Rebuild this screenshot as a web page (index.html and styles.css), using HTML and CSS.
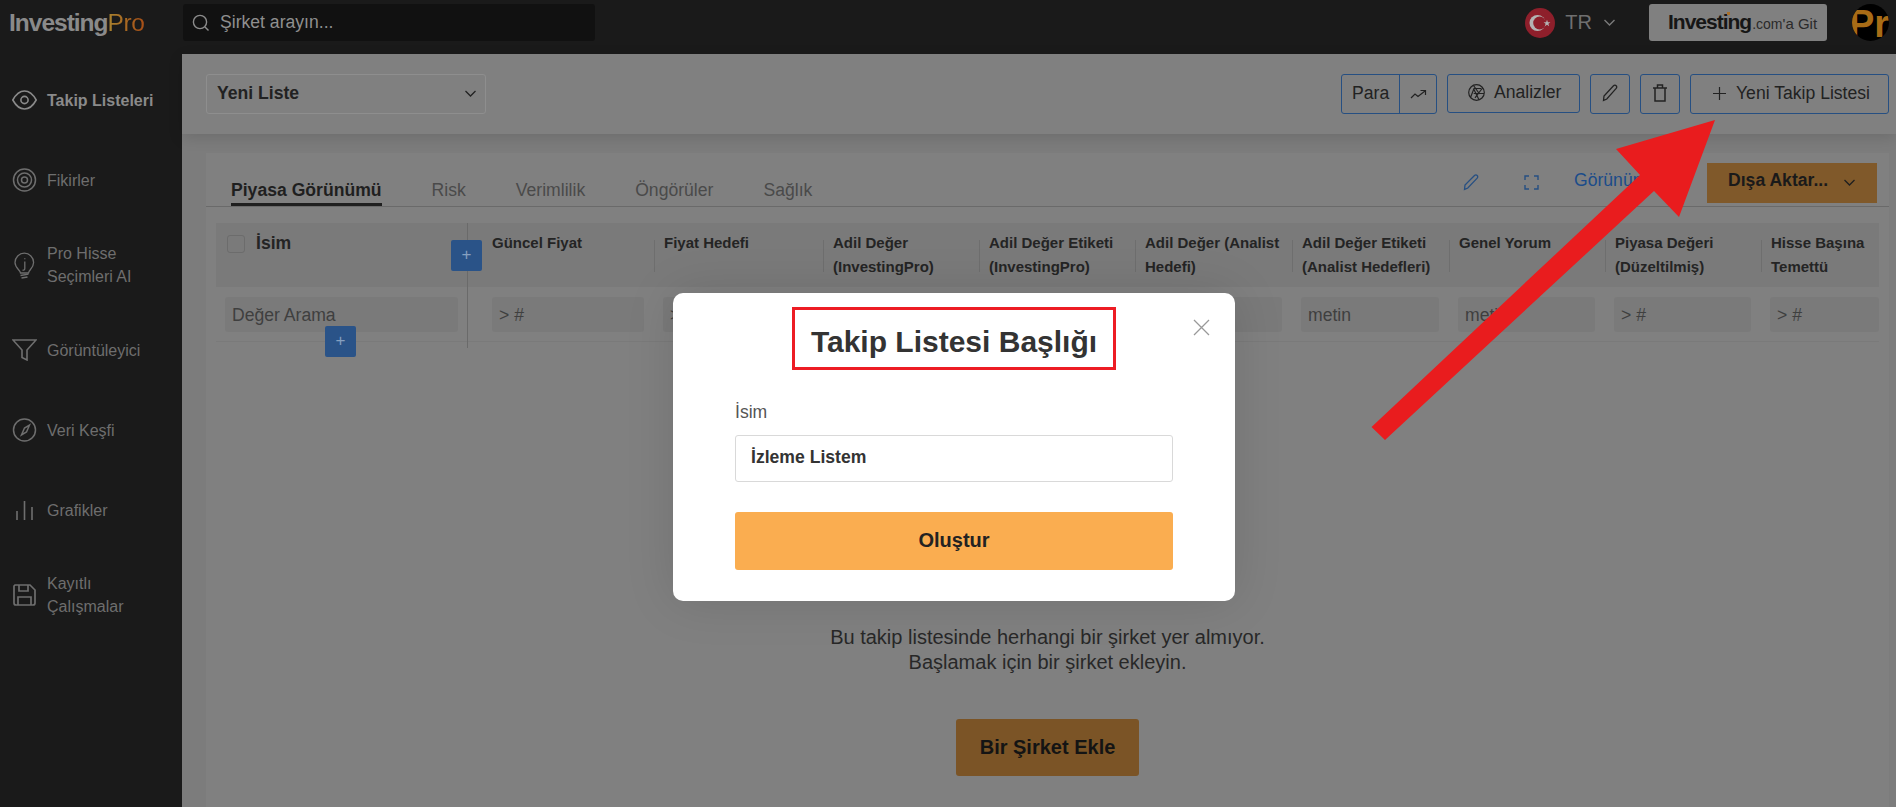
FILE: index.html
```html
<!DOCTYPE html>
<html lang="tr">
  <head>
    <title>Takip Listeleri • InvestingPro</title>
    <meta http-equiv="Content-Type" content="text/html;charset=UTF-8">
    <link rel="stylesheet" href="styles.css">
  </head>
  <body>
    <!-- Top bar -->
    <header class="topbar">
      <div class="logo">Investing<span class="logo-pro">Pro</span></div>
      <div class="search">
        <svg class="icon" width="18" height="18" viewBox="0 0 18 18" fill="none" stroke="#8c8c8c" stroke-width="1.4"><circle cx="8" cy="8" r="6.6"/><path d="M13 13l3.5 3.5"/></svg>
        <span>Şirket arayın...</span>
      </div>
      <div class="topbar-right">
        <svg class="flag" width="30" height="30" viewBox="0 0 30 30">
          <circle cx="15" cy="15" r="15" fill="#8e1f2b"/>
          <circle cx="12.5" cy="15" r="8" fill="#b3b3b3"/>
          <circle cx="14.6" cy="15" r="6.4" fill="#8e1f2b"/>
          <polygon points="22,11.8 22.9,14.2 25.4,14.2 23.4,15.8 24.1,18.2 22,16.8 19.9,18.2 20.6,15.8 18.6,14.2 21.1,14.2" fill="#b3b3b3"/>
        </svg>
        <span class="lang">TR</span>
        <svg class="lang-chevron" width="11" height="7" viewBox="0 0 11 7" fill="none" stroke="#7a7a7a" stroke-width="1.4"><path d="M.5 1l5 5 5-5"/></svg>
        <div class="git-btn"><span class="git-brand">Investing</span><span class="git-com">.com</span><span class="git-text">'a Git</span></div>
        <div class="avatar"><span>Pro</span></div>
      </div>
    </header>

    <div class="shell">
      <!-- Sidebar -->
      <nav class="sidebar">
        <a class="nav-item active">
          <svg width="25" height="20" viewBox="0 0 25 20" fill="none" stroke="#8a8a8a" stroke-width="1.6"><path d="M.8 10C4 4.2 8 1 12.5 1S21 4.2 24.2 10C21 15.8 17 19 12.5 19S4 15.8.8 10z"/><circle cx="12.5" cy="10" r="3.6"/></svg>
          <span>Takip Listeleri</span>
        </a>
        <a class="nav-item">
          <svg width="25" height="24" viewBox="0 0 25 24" fill="none" stroke="#6e6e6e" stroke-width="1.5"><circle cx="12.5" cy="12" r="11"/><circle cx="12.5" cy="12" r="7"/><circle cx="12.5" cy="12" r="3"/></svg>
          <span>Fikirler</span>
        </a>
        <a class="nav-item">
          <svg width="25" height="27" viewBox="0 0 25 27" fill="none" stroke="#6e6e6e" stroke-width="1.3"><path d="M8.5 21c-.3-3-5.5-5-5.5-10.5a9.300 9.300 0 0 1 18.600 0C21.600 16 16.800 18 16.500 21z"/><path d="M12.800 9.500v7c0 1.500-1 2-2.300 1.500M12.800 6.200v1M8.500 23.500l8-1.300M9.500 26l6-1"/></svg>
          <span>Pro Hisse<br>Seçimleri AI</span>
        </a>
        <a class="nav-item">
          <svg width="25" height="22" viewBox="0 0 25 22" fill="none" stroke="#6e6e6e" stroke-width="1.6"><path d="M1 1h23l-9 10v10l-5-2.500V11z"/></svg>
          <span>Görüntüleyici</span>
        </a>
        <a class="nav-item">
          <svg width="25" height="24" viewBox="0 0 25 24" fill="none" stroke="#6e6e6e" stroke-width="1.5"><circle cx="12.5" cy="12" r="11"/><path d="M17.500 7l-3 7-5 3 3-7z"/></svg>
          <span>Veri Keşfi</span>
        </a>
        <a class="nav-item">
          <svg width="25" height="20" viewBox="0 0 25 20" fill="none" stroke="#6e6e6e" stroke-width="1.6"><path d="M5 20v-9M12.500 20V1M20 20V7"/></svg>
          <span>Grafikler</span>
        </a>
        <a class="nav-item">
          <svg width="25" height="22" viewBox="0 0 25 22" fill="none" stroke="#6e6e6e" stroke-width="1.7"><path d="M3 1h15l5 5v13a2 2 0 0 1-2 2H4a2 2 0 0 1-2-2V2z"/><path d="M7 1v6h9V1M6 21v-8h13v8"/></svg>
          <span>Kayıtlı<br>Çalışmalar</span>
        </a>
      </nav>

      <main class="content">
        <!-- Toolbar -->
        <div class="toolbar">
          <div class="list-select">
            <span>Yeni Liste</span>
            <svg width="11" height="7" viewBox="0 0 11 7" fill="none" stroke="#222" stroke-width="1.3"><path d="M.5 1l5 5 5-5"/></svg>
          </div>
          <div class="actions">
            <div class="btn btn-split">
              <span class="split-label">Para</span>
              <span class="split-icon"><svg width="17" height="11" viewBox="0 0 17 11" fill="none" stroke="#222" stroke-width="1.2"><path d="M1 9l4-4 3 2.500L15 2M10.500 1.500H15.500V6"/></svg></span>
            </div>
            <div class="btn btn-analiz">
              <svg width="17" height="17" viewBox="0 0 17 17" fill="none" stroke="#222" stroke-width="1.2"><circle cx="8.500" cy="8.500" r="7.800"/><path d="M5.500 1.500l6 8.500M14.500 4l-7.500 9.800M16 9.500H5.700M11 15.800L5.700 5M2.500 13.500L6 4.500h7"/></svg>
              <span>Analizler</span>
            </div>
            <div class="btn btn-square">
              <svg width="16" height="18" viewBox="0 0 16 18" fill="none" stroke="#222" stroke-width="1.3"><path d="M1.500 16.500l.5-4.500L11.500 1.800c.8-.8 2-.8 2.700 0 .7.700.7 1.900 0 2.600L4.800 15z"/></svg>
            </div>
            <div class="btn btn-square">
              <svg width="14" height="18" viewBox="0 0 14 18" fill="none" stroke="#222" stroke-width="1.5"><path d="M0 4h14M4.500 4V1h5v3M2 4v13h10V4"/></svg>
            </div>
            <div class="btn btn-new">
              <svg width="13" height="13" viewBox="0 0 13 13" fill="none" stroke="#222" stroke-width="1.2"><path d="M6.500 0v13M0 6.500h13"/></svg>
              <span>Yeni Takip Listesi</span>
            </div>
          </div>
        </div>

        <!-- Watchlist card -->
        <section class="card">
          <div class="tabs-row">
            <div class="tabs">
              <span class="tab active">Piyasa Görünümü</span>
              <span class="tab">Risk</span>
              <span class="tab">Verimlilik</span>
              <span class="tab">Öngörüler</span>
              <span class="tab">Sağlık</span>
            </div>
            <div class="tab-tools">
              <svg class="tool-pencil" width="16" height="17" viewBox="0 0 16 17" fill="none" stroke="#264f82" stroke-width="1.3"><path d="M1.500 15.500l.5-4.500L11.500 1.500c.8-.8 2-.8 2.700 0 .7.700.7 1.900 0 2.600L4.800 14z"/></svg>
              <svg class="tool-expand" width="15" height="15" viewBox="0 0 15 15" fill="none" stroke="#264f82" stroke-width="1.4"><path d="M1 5V1h4M10 1h4v4M14 10v4h-4M5 14H1v-4"/></svg>
              <span class="tool-link">Görünüm</span>
              <div class="export-btn">
                <span>Dışa Aktar...</span>
                <svg width="11" height="7" viewBox="0 0 11 7" fill="none" stroke="#1f1f1f" stroke-width="1.3"><path d="M.5 1l5 5 5-5"/></svg>
              </div>
            </div>
          </div>

          <div class="table">
            <div class="cols table-head">
              <div class="name-head"><span class="check"></span><span>İsim</span></div>
              <div class="hcell first">Güncel Fiyat</div>
              <div class="hcell">Fiyat Hedefi</div>
              <div class="hcell">Adil Değer (InvestingPro)</div>
              <div class="hcell">Adil Değer Etiketi (InvestingPro)</div>
              <div class="hcell">Adil Değer (Analist Hedefi)</div>
              <div class="hcell">Adil Değer Etiketi (Analist Hedefleri)</div>
              <div class="hcell">Genel Yorum</div>
              <div class="hcell">Piyasa Değeri (Düzeltilmiş)</div>
              <div class="hcell">Hisse Başına Temettü</div>
            </div>
            <div class="cols table-filter">
              <div class="fcell name"><span class="finput">Değer Arama</span></div>
              <div class="fcell first"><span class="finput">&gt; #</span></div>
              <div class="fcell"><span class="finput">&gt; #</span></div>
              <div class="fcell"><span class="finput">&gt; #</span></div>
              <div class="fcell"><span class="finput">metin</span></div>
              <div class="fcell"><span class="finput">&gt; #</span></div>
              <div class="fcell"><span class="finput">metin</span></div>
              <div class="fcell"><span class="finput">metin</span></div>
              <div class="fcell"><span class="finput">&gt; #</span></div>
              <div class="fcell last"><span class="finput">&gt; #</span></div>
            </div>
            <span class="freeze-line"></span>
            <span class="add-btn add-col">+</span>
            <span class="add-btn add-row">+</span>
          </div>

          <div class="empty">
            <p>Bu takip listesinde herhangi bir şirket yer almıyor.<br>Başlamak için bir şirket ekleyin.</p>
            <div class="add-company">Bir Şirket Ekle</div>
          </div>
        </section>
      </main>
    </div>

    <!-- Dialog -->
    <div class="modal">
      <svg class="modal-close" width="17" height="17" viewBox="0 0 17 17" fill="none" stroke="#999" stroke-width="1.3"><path d="M1 1l15 15M16 1L1 16"/></svg>
      <h2 class="modal-title">Takip Listesi Başlığı</h2>
      <label class="modal-label">İsim</label>
      <div class="modal-input">İzleme Listem</div>
      <div class="modal-submit">Oluştur</div>
    </div>

    <!-- Red annotation arrow -->
    <svg class="annotation" width="1896" height="807" viewBox="0 0 1896 807">
      <polygon points="1715,120 1679,217 1654,191 1385,440 1371.5,427 1640,175 1616,149" fill="#e91c1e"/>
    </svg>
  </body>
</html>
```

FILE: styles.css
```css
* {
  box-sizing: border-box;
}
html, body {
  margin: 0;
  height: 100%;
}
body {
  overflow: hidden;
  background-color: #7c7c7c;
  color: #222;
  font-family: "Liberation Sans", Arial, sans-serif;
  font-size: 17.6px;
}

/* Top bar */
.topbar {
  display: flex;
  align-items: flex-start;
  height: 54px;
  padding: 4px 7px 0 0;
  background-color: #1a1a1a;
}
.logo {
  width: 183px;
  height: 37px;
  padding-left: 9px;
  line-height: 37px;
  font-size: 24.5px;
  font-weight: bold;
  letter-spacing: -1px;
  color: #8a8a8a;
}
.logo-pro {
  font-weight: normal;
  letter-spacing: -.4px;
  background: linear-gradient(90deg, #a8822f, #a84f16);
  -webkit-background-clip: text;
  background-clip: text;
  color: transparent;
}
.search {
  display: flex;
  align-items: center;
  gap: 10px;
  width: 412px;
  height: 37px;
  padding-left: 9px;
  border-radius: 3px;
  background-color: #111;
  color: #8f8f8f;
}
.topbar-right {
  display: flex;
  align-items: center;
  margin-left: auto;
  height: 37px;
}
.lang {
  margin-left: 10px;
  font-size: 20px;
  color: #6f6f6f;
}
.lang-chevron {
  margin-left: 12px;
}
.git-btn {
  position: relative;
  display: flex;
  align-items: baseline;
  width: 178px;
  height: 37px;
  margin-left: 34px;
  padding: 6px 0 0 19px;
  border-radius: 3px;
  background-color: #808080;
  color: #2a2a2a;
}
.git-brand {
  font-size: 21px;
  font-weight: bold;
  letter-spacing: -1px;
  color: #161616;
}
.git-com {
  font-size: 14px;
  margin-left: 1px;
}
.git-text {
  font-size: 15px;
}
.git-brand::after {
  content: "";
  position: absolute;
  left: 78px;
  top: 8px;
  width: 3px;
  height: 3px;
  background-color: #a8702a;
}
.avatar {
  width: 37px;
  height: 37px;
  margin-left: 25px;
  border-radius: 50%;
  overflow: hidden;
  background-color: #000;
  font-size: 38px;
  font-weight: bold;
  line-height: 40px;
  color: #a86c16;
  white-space: nowrap;
}
.avatar span {
  margin-left: -3px;
}

/* Layout */
.shell {
  display: flex;
  height: calc(100% - 54px);
}
.sidebar {
  flex: none;
  width: 182px;
  padding-top: 6px;
  background-color: #1a1a1a;
}
.nav-item {
  display: flex;
  align-items: center;
  gap: 10px;
  min-height: 80px;
  padding: 22px 0 22px 12px;
  font-size: 16px;
  line-height: 23px;
  color: #6e6e6e;
}
.nav-item svg {
  flex: none;
}
.nav-item.active {
  font-weight: bold;
  color: #8a8a8a;
}
.content {
  flex-grow: 1;
  min-width: 0;
  height: 100%;
}

/* Toolbar */
.toolbar {
  display: flex;
  justify-content: space-between;
  height: 80px;
  padding: 20px 7px 20px 24px;
  background-color: #808080;
  box-shadow: 0 4px 14px rgba(0, 0, 0, .12);
}
.list-select {
  display: flex;
  align-items: center;
  justify-content: space-between;
  width: 280px;
  height: 40px;
  padding: 0 9px 2px 10px;
  border: 1px solid #8e8e8e;
  border-radius: 3px;
  font-weight: bold;
  color: #222;
}
.actions {
  display: flex;
  gap: 10px;
}
.btn {
  display: flex;
  align-items: center;
  height: 40px;
  padding-bottom: 2px;
  border: 1px solid #264f82;
  border-radius: 3px;
  color: #222;
}
.btn-split {
  width: 96px;
  padding-bottom: 0;
}
.split-label {
  width: 58px;
  padding-left: 10px;
  padding-bottom: 2px;
  line-height: 36px;
  border-right: 1px solid #264f82;
}
.split-icon {
  display: flex;
  justify-content: center;
  flex-grow: 1;
}
.btn-analiz {
  width: 133px;
  height: 39px;
  gap: 9px;
  padding-left: 20px;
}
.btn-square {
  justify-content: center;
  width: 40px;
}
.btn-new {
  width: 199px;
  gap: 10px;
  padding-left: 22px;
}

/* Card */
.card {
  height: calc(100% - 99px);
  margin: 19px 7px 0 24px;
  padding: 0 10px;
  background-color: #808080;
}
.tabs-row {
  display: flex;
  justify-content: space-between;
  align-items: flex-end;
  height: 54px;
  margin: 0 -10px;
  padding: 0 12px 0 25px;
  border-bottom: 1px solid #6a6a6a;
}
.tabs {
  display: flex;
  gap: 50px;
}
.tab {
  height: 30px;
  line-height: 28px;
  color: #4a4a4a;
}
.tab.active {
  border-bottom: 3px solid #1f1f1f;
  font-weight: bold;
  color: #1f1f1f;
}
.tab-tools {
  display: flex;
  align-items: center;
  height: 54px;
  padding-top: 7px;
}
.tool-expand {
  margin-left: 45px;
}
.tool-link {
  margin: 0 0 4px 35px;
  width: 133px;
  color: #1b4c8a;
}
.export-btn {
  display: flex;
  align-items: center;
  justify-content: space-between;
  width: 170px;
  height: 40px;
  padding: 0 22px 4px 21px;
  background-color: #80592a;
  font-weight: bold;
  color: #1a1a1a;
}
.export-btn svg {
  margin-top: 4px;
}

/* Table */
.table {
  position: relative;
  margin-top: 16px;
}
.cols {
  display: grid;
  grid-template-columns: 251px 187px 169px 156px 156px 157px 157px 156px 156px 118px;
}
.table-head {
  height: 64px;
  background-color: #7a7a7a;
  font-size: 15px;
  font-weight: bold;
  line-height: 24px;
  color: #242424;
}
.name-head {
  display: flex;
  gap: 11px;
  padding: 8px 0 0 11px;
  font-size: 17.6px;
}
.check {
  width: 18px;
  height: 18px;
  margin-top: 4px;
  border: 1.5px solid #6c6c6c;
  border-radius: 3px;
}
.hcell {
  position: relative;
  padding: 8px 2px 0 10px;
}
.hcell::before {
  content: "";
  position: absolute;
  left: 0;
  top: 17px;
  height: 32px;
  border-left: 1px solid #6e6e6e;
}
.hcell.first {
  padding-left: 25px;
}
.hcell.first::before {
  display: none;
}
.table-filter {
  height: 55px;
  padding-top: 10px;
  border-bottom: 1px solid #7a7a7a;
}
.fcell {
  padding: 0 10px 0 9px;
}
.fcell.name {
  padding: 0 9px;
}
.fcell.first {
  padding-left: 25px;
}
.fcell.last {
  padding-right: 0;
}
.finput {
  display: block;
  height: 35px;
  padding-left: 7px;
  border-radius: 3px;
  background-color: #7a7a7a;
  line-height: 37px;
  color: #3f3f3f;
}
.freeze-line {
  position: absolute;
  left: 251px;
  top: 0;
  height: 125px;
  border-left: 1px solid #6a6a6a;
}
.add-btn {
  position: absolute;
  width: 31px;
  height: 31px;
  border-radius: 2px;
  background-color: #2a5388;
  text-align: center;
  line-height: 29px;
  font-size: 17px;
  color: #86a0c0;
}
.add-col {
  left: 235px;
  top: 17px;
}
.add-row {
  left: 109px;
  top: 103px;
}

/* Empty state */
.empty {
  margin-top: 283px;
  text-align: center;
}
.empty p {
  margin: 0;
  font-size: 20px;
  line-height: 25px;
  color: #282828;
}
.add-company {
  width: 183px;
  height: 57px;
  margin: 44px auto 0;
  border-radius: 3px;
  background-color: #7b5426;
  font-size: 20px;
  font-weight: bold;
  line-height: 57px;
  color: #141414;
}

/* Modal */
.modal {
  position: absolute;
  left: 673px;
  top: 293px;
  width: 562px;
  height: 308px;
  padding: 14px 62px 0;
  border-radius: 10px;
  background-color: white;
  box-shadow: 0 0 50px rgba(0, 0, 0, .12);
  color: #333;
}
.modal-close {
  position: absolute;
  right: 25px;
  top: 26px;
}
.modal-title {
  width: 324px;
  height: 63px;
  margin: 0 auto 30px;
  border: 3.5px solid #ed1c24;
  font-size: 30px;
  line-height: 64px;
  text-align: center;
}
.modal-label {
  display: block;
  height: 25px;
  margin-bottom: 10px;
  color: #555;
  line-height: 25px;
}
.modal-input {
  height: 47px;
  padding-left: 15px;
  border: 1px solid #d9d9d9;
  border-radius: 3px;
  font-weight: bold;
  line-height: 43px;
}
.modal-submit {
  height: 58px;
  margin-top: 30px;
  border-radius: 3px;
  background-color: #faad50;
  font-size: 20px;
  font-weight: bold;
  line-height: 56px;
  text-align: center;
  color: #222;
}

/* Annotation */
.annotation {
  position: absolute;
  left: 0;
  top: 0;
  pointer-events: none;
}
```
